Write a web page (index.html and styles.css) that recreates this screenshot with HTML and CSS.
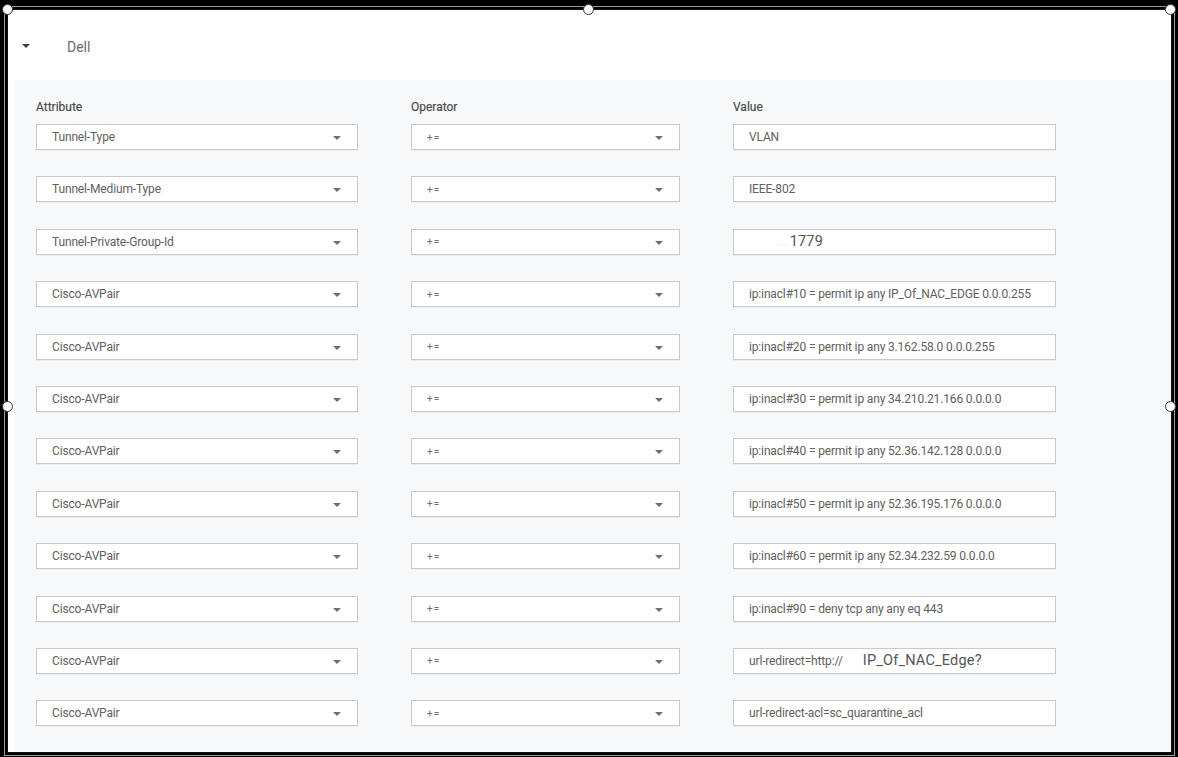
FILE: index.html
```html
<!DOCTYPE html>
<html>
<head>
<meta charset="utf-8">
<link rel="stylesheet" href="styles.css">
</head>
<body>
<div class="frame">
  <div class="header">
    <span class="caret-big"></span>
    <span class="title">Dell</span>
  </div>
  <div class="panel">
    <div class="labels">
      <div class="label">Attribute</div>
      <div class="label">Operator</div>
      <div class="label">Value</div>
    </div>
    <div class="grid">
      <div class="select"><span>Tunnel-Type</span><i class="dd"></i></div>
      <div class="select op"><span>+=</span><i class="dd"></i></div>
      <div class="input"><span>VLAN</span></div>

      <div class="select"><span>Tunnel-Medium-Type</span><i class="dd"></i></div>
      <div class="select op"><span>+=</span><i class="dd"></i></div>
      <div class="input"><span>IEEE-802</span></div>

      <div class="select"><span>Tunnel-Private-Group-Id</span><i class="dd"></i></div>
      <div class="select op"><span>+=</span><i class="dd"></i></div>
      <div class="input"><span class="faint">....</span><span class="big">1779</span></div>

      <div class="select"><span>Cisco-AVPair</span><i class="dd"></i></div>
      <div class="select op"><span>+=</span><i class="dd"></i></div>
      <div class="input"><span>ip:inacl#10 = permit ip any IP_Of_NAC_EDGE 0.0.0.255</span></div>

      <div class="select"><span>Cisco-AVPair</span><i class="dd"></i></div>
      <div class="select op"><span>+=</span><i class="dd"></i></div>
      <div class="input"><span>ip:inacl#20 = permit ip any 3.162.58.0 0.0.0.255</span></div>

      <div class="select"><span>Cisco-AVPair</span><i class="dd"></i></div>
      <div class="select op"><span>+=</span><i class="dd"></i></div>
      <div class="input"><span>ip:inacl#30 = permit ip any 34.210.21.166 0.0.0.0</span></div>

      <div class="select"><span>Cisco-AVPair</span><i class="dd"></i></div>
      <div class="select op"><span>+=</span><i class="dd"></i></div>
      <div class="input"><span>ip:inacl#40 = permit ip any 52.36.142.128 0.0.0.0</span></div>

      <div class="select"><span>Cisco-AVPair</span><i class="dd"></i></div>
      <div class="select op"><span>+=</span><i class="dd"></i></div>
      <div class="input"><span>ip:inacl#50 = permit ip any 52.36.195.176 0.0.0.0</span></div>

      <div class="select"><span>Cisco-AVPair</span><i class="dd"></i></div>
      <div class="select op"><span>+=</span><i class="dd"></i></div>
      <div class="input"><span>ip:inacl#60 = permit ip any 52.34.232.59 0.0.0.0</span></div>

      <div class="select"><span>Cisco-AVPair</span><i class="dd"></i></div>
      <div class="select op"><span>+=</span><i class="dd"></i></div>
      <div class="input"><span>ip:inacl#90 = deny tcp any any eq 443</span></div>

      <div class="select"><span>Cisco-AVPair</span><i class="dd"></i></div>
      <div class="select op"><span>+=</span><i class="dd"></i></div>
      <div class="input"><span>url-redirect=http://</span><span class="big gap">IP_Of_NAC_Edge?</span></div>

      <div class="select"><span>Cisco-AVPair</span><i class="dd"></i></div>
      <div class="select op"><span>+=</span><i class="dd"></i></div>
      <div class="input"><span>url-redirect-acl=sc_quarantine_acl</span></div>

      <div class="stub"></div>
    </div>
  </div>
</div>
<span class="handle h-tl"></span>
<span class="handle h-tm"></span>
<span class="handle h-tr"></span>
<span class="handle h-ml"></span>
<span class="handle h-mr"></span>
</body>
</html>
```

FILE: styles.css
```css
html, body {
  margin: 0;
  padding: 0;
  background: #000;
  width: 1178px;
  height: 757px;
  overflow: hidden;
  font-family: Roboto, "Liberation Sans", sans-serif;
}

body {
  position: relative;
  padding: 10px 7px 0 8px;
  box-sizing: border-box;
}

.frame {
  width: 1163px;
  height: 742px;
  background: #fff;
  overflow: hidden;
  box-shadow: 0 0 0 1px #111, 0 0 0 3px #000, 0 0 0 4px #9a9a9a;
}

.header {
  height: 70px;
  display: flex;
  align-items: center;
  padding-left: 14px;
}

.caret-big {
  width: 0;
  height: 0;
  border-left: 4px solid transparent;
  border-right: 4px solid transparent;
  border-top: 4px solid #39414b;
  margin-top: 2px;
}

.title {
  margin-left: 37px;
  font-size: 14px;
  color: #6b6b6b;
  margin-top: 3px;
}

.panel {
  margin-left: 7px;
  height: 672px;
  background: #f7f8fa;
  padding: 19px 0 0 21px;
  box-sizing: border-box;
}

.labels, .grid {
  display: grid;
  grid-template-columns: 322px 269px 323px;
  column-gap: 53px;
}

.labels {
  margin-bottom: 9px;
}

.grid {
  row-gap: 26.4px;
  grid-auto-rows: 26px;
}

.label {
  font-size: 12px;
  line-height: 16px;
  color: #4d4d4d;
  font-weight: 400;
  -webkit-text-stroke: 0.2px #4d4d4d;
}

.select, .input {
  background: #fff;
  border: 1px solid #c9c9c9;
  box-shadow: 0 1px 0 rgba(0,0,0,0.04);
  box-sizing: border-box;
  display: flex;
  align-items: center;
  padding-left: 15px;
  font-size: 12px;
  color: #606060;
  position: relative;
  white-space: nowrap;
}

.select span, .input span {
  letter-spacing: -0.15px;
}

.op span {
  font-size: 10px;
  letter-spacing: 1px;
  color: #707070;
}

.dd {
  position: absolute;
  right: 16px;
  top: 11px;
  width: 0;
  height: 0;
  border-left: 4px solid transparent;
  border-right: 4px solid transparent;
  border-top: 4px solid #6e6e6e;
}

.input .big {
  font-size: 14.5px;
  color: #555;
  letter-spacing: 0.2px;
}

.input .faint {
  color: #e6e6e6;
  font-size: 12px;
  margin-left: 28px;
  letter-spacing: 0;
}

.input .gap {
  margin-left: 20px;
}

.stub {
  grid-column: 1;
  width: 107px;
  height: 26px;
  border: 1px solid #ddd;
  background: #fff;
}

.handle {
  position: absolute;
  width: 11px;
  height: 11px;
  border-radius: 50%;
  background: #fff;
  border: 1.5px solid #333;
  box-sizing: border-box;
}
.h-tl { left: 2px; top: 4px; }
.h-tm { left: 583px; top: 4px; }
.h-tr { left: 1165px; top: 4px; }
.h-ml { left: 2px; top: 401px; }
.h-mr { left: 1165px; top: 401px; }
```
